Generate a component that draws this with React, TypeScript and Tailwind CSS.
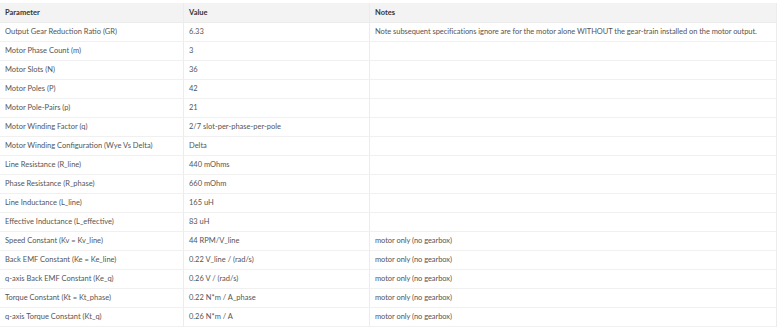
import React from "react";

const rows: [string, string, string][] = [
  ["Output Gear Reduction Ratio (GR)", "6.33", "Note subsequent specifications ignore are for the motor alone WITHOUT the gear-train installed on the motor output."],
  ["Motor Phase Count (m)", "3", ""],
  ["Motor Slots (N)", "36", ""],
  ["Motor Poles (P)", "42", ""],
  ["Motor Pole-Pairs (p)", "21", ""],
  ["Motor Winding Factor (q)", "2/7 slot-per-phase-per-pole", ""],
  ["Motor Winding Configuration (Wye Vs Delta)", "Delta", ""],
  ["Line Resistance (R_line)", "440 mOhms", ""],
  ["Phase Resistance (R_phase)", "660 mOhm", ""],
  ["Line Inductance (L_line)", "165 uH", ""],
  ["Effective Inductance (L_effective)", "83 uH", ""],
  ["Speed Constant (Kv = Kv_line)", "44 RPM/V_line", "motor only (no gearbox)"],
  ["Back EMF Constant (Ke = Ke_line)", "0.22 V_line / (rad/s)", "motor only (no gearbox)"],
  ["q-axis Back EMF Constant (Ke_q)", "0.26 V / (rad/s)", "motor only (no gearbox)"],
  ["Torque Constant (Kt = Kt_phase)", "0.22 N*m / A_phase", "motor only (no gearbox)"],
  ["q-axis Torque Constant (Kt_q)", "0.26 N*m / A", "motor only (no gearbox)"],
];

export default function App() {
  return (
    <div
      className="w-[780px] h-[330px] bg-white pt-[3px] overflow-hidden"
      style={{ fontFamily: "Lato, 'Liberation Sans', sans-serif" }}
    >
      <div className="w-[777px] border-r border-[#ececec]">
        <div className="grid grid-cols-[184px_186px_1fr] h-[20px] bg-[#f3f3f3] border-b border-[#ececec] text-[7.5px] font-bold text-[#333]">
          <div className="flex items-center pl-[5px] border-r border-[#ececec]">Parameter</div>
          <div className="flex items-center pl-[5px] border-r border-[#ececec]">Value</div>
          <div className="flex items-center pl-[5px]">Notes</div>
        </div>
        {rows.map((r, i) => (
          <div
            key={i}
            className="grid grid-cols-[184px_186px_1fr] h-[19px] border-b border-[#f0f0f0] text-[7.5px] text-[#555]"
          >
            <div className="flex items-center pl-[5px] border-r border-[#ececec] whitespace-nowrap">{r[0]}</div>
            <div className="flex items-center pl-[5px] border-r border-[#ececec] whitespace-nowrap">{r[1]}</div>
            <div className="flex items-center pl-[5px] whitespace-nowrap tracking-[-0.05px]">{r[2]}</div>
          </div>
        ))}
      </div>
    </div>
  );
}
